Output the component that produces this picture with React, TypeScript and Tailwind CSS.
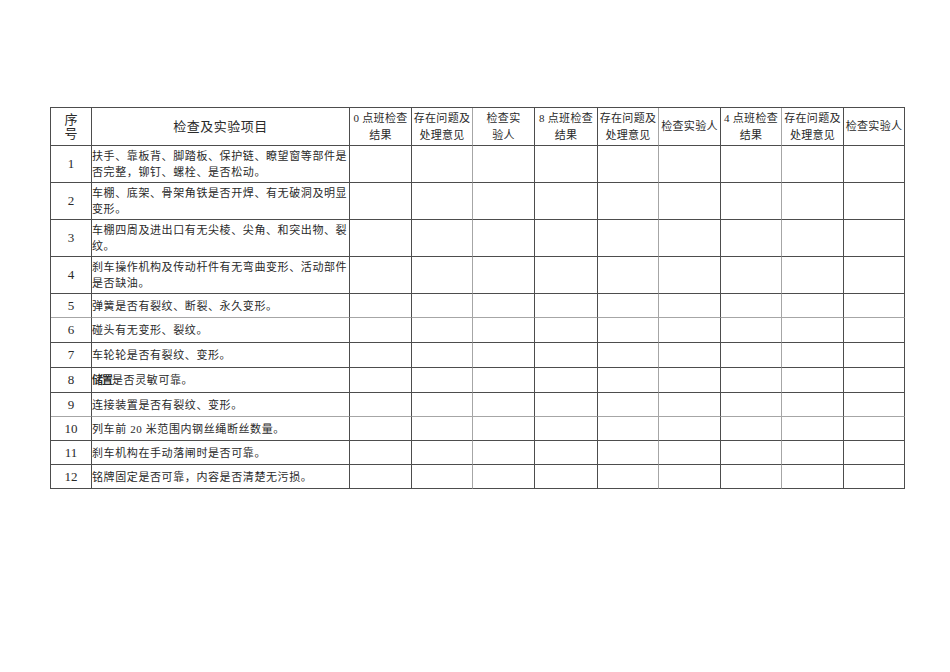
const DARK = "#4d4d4d";

type Row = { no: string; lines: string[] };

const rows: Row[] = [
  { no: "1", lines: ["扶手、靠板背、脚踏板、保护链、瞭望窗等部件是", "否完整，铆钉、螺栓、是否松动。"] },
  { no: "2", lines: ["车棚、底架、骨架角铁是否开焊、有无破洞及明显", "变形。"] },
  { no: "3", lines: ["车棚四周及进出口有无尖棱、尖角、和突出物、裂", "纹。"] },
  { no: "4", lines: ["刹车操作机构及传动杆件有无弯曲变形、活动部件", "是否缺油。"] },
  { no: "5", lines: ["弹簧是否有裂纹、断裂、永久变形。"] },
  { no: "6", lines: ["碰头有无变形、裂纹。"] },
  { no: "7", lines: ["车轮轮是否有裂纹、变形。"] },
  { no: "8", lines: ["储置是否灵敏可靠。"] },
  { no: "9", lines: ["连接装置是否有裂纹、变形。"] },
  { no: "10", lines: ["列车前 20 米范围内钢丝绳断丝数量。"] },
  { no: "11", lines: ["刹车机构在手动落闸时是否可靠。"] },
  { no: "12", lines: ["铭牌固定是否可靠，内容是否清楚无污损。"] }
];

const headers: string[][] = [
  ["0 点班检查", "结果"],
  ["存在问题及", "处理意见"],
  ["检查实", "验人"],
  ["8 点班检查", "结果"],
  ["存在问题及", "处理意见"],
  ["检查实验人"],
  ["4 点班检查", "结果"],
  ["存在问题及", "处理意见"],
  ["检查实验人"]
];

// vertical lines that came out lighter in the scan (index of column whose right edge is grey)
const greyRight = new Set([3, 6, 8]);
// rows whose bottom edge is grey (row index in rows[])
const greyBottom = new Set([4, 8]);

function cellBorder(col: number, rowIdx: number) {
  const r = greyRight.has(col) ? "border-r-[#a6a6a6]" : "border-r-[#4d4d4d]";
  const b = greyBottom.has(rowIdx) ? "border-b-[#a6a6a6]" : "border-b-[#4d4d4d]";
  return `border-r border-b ${r} ${b}`;
}

function HeaderRow() {
  return (
    <>
      <div className={`${cellBorder(0, -1)} flex flex-col items-center justify-center text-[13px] leading-[14px]`}>
        <span>序</span>
        <span>号</span>
      </div>
      <div className={`${cellBorder(1, -1)} flex items-center justify-center text-[13px] tracking-[0.5px]`}>
        检查及实验项目
      </div>
      {headers.map((lines, i) => (
        <div
          key={i}
          className={`${cellBorder(i + 2, -1)} flex flex-col items-center justify-center whitespace-nowrap text-[11px] leading-[17px] tracking-[0.3px]`}
        >
          {lines.map((l) => (
            <span key={l}>{l}</span>
          ))}
        </div>
      ))}
    </>
  );
}

function DataRow({ row, idx }: { row: Row; idx: number }) {
  return (
    <>
      <div className={`${cellBorder(0, idx)} flex items-center justify-center text-[13px]`}>
        {row.no}
      </div>
      <div className={`${cellBorder(1, idx)} flex flex-col justify-center whitespace-nowrap text-[11px] leading-[16px] tracking-[0.6px]`}>
        {row.lines.map((l) =>
          row.no === "8" ? (
            <span key={l}>
              <span className="font-bold tracking-[-1px]">储置</span>
              {l.slice(2)}
            </span>
          ) : (
            <span key={l}>{l}</span>
          )
        )}
      </div>
      {headers.map((_, i) => (
        <div key={i} className={cellBorder(i + 2, idx)} />
      ))}
    </>
  );
}

export default function App() {
  return (
    <div className="h-[672px] w-[950px] bg-white pl-[50px] pt-[107px] font-['Liberation_Serif','Noto_Sans_CJK_SC',serif] text-[#2a2a2a]">
      <div
        className="grid w-[855px] grid-cols-[41px_258px_62px_61px_62px_63px_61px_62px_61px_62px_61px] grid-rows-[38px_37px_37px_37px_37px_24px_25px_25px_25px_24px_24px_24px_24px] border-l border-t"
        style={{ borderColor: DARK }}
      >
        <HeaderRow />
        {rows.map((row, idx) => (
          <DataRow key={row.no} row={row} idx={idx} />
        ))}
      </div>
    </div>
  );
}
